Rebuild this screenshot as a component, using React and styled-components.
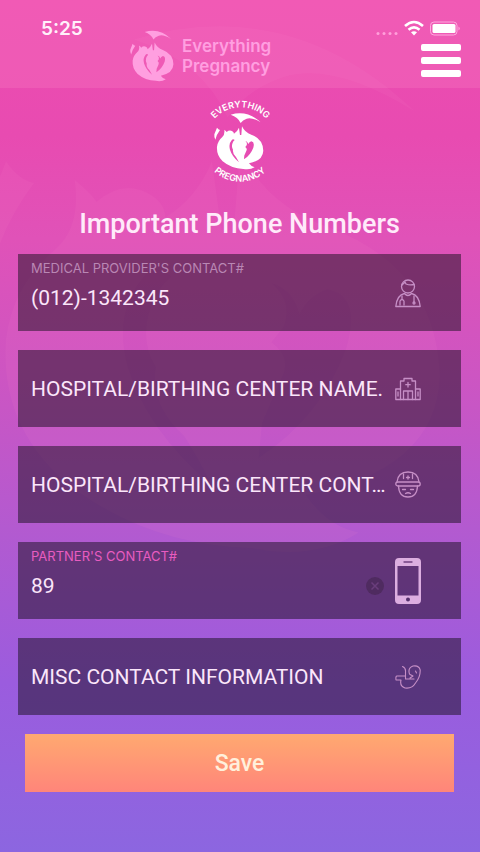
import React, { useState } from 'react';
import styled, { createGlobalStyle } from 'styled-components';

const GlobalStyle = createGlobalStyle`
  * {
    box-sizing: border-box;
  }

  body {
    margin: 0;
    font-family: Inter, sans-serif;
    color: #fdeafa;
  }
`;

const Page = styled.div`
  position: relative;
  overflow: hidden;
  min-height: 100vh;
  background: linear-gradient(
    #ee4cb0 0%,
    #e84bb1 16%,
    #e052b8 28%,
    #cd55c2 44%,
    #b35ad0 62%,
    #9b5cde 80%,
    #8c66e0 100%
  );
`;

const Watermark = styled.svg`
  position: absolute;
  top: 24px;
  left: -22px;
  width: 468px;
  color: #ff8fce;
  opacity: 0.08;
`;

const Header = styled.header`
  position: relative;
  display: grid;
  grid-template-columns: 89px 1fr auto;
  height: 88px;
  padding: 20px 19px 0 41px;
  background: rgba(255, 150, 205, 0.2);
`;

const Time = styled.time`
  font-size: 19px;
  font-weight: 600;
  line-height: 18px;
  color: #fff0fa;
`;

const Brand = styled.a`
  display: flex;
  gap: 8px;
  align-self: start;
  padding-top: 10px;
  color: #ff9fe0;
  text-decoration: none;
`;

const BrandMark = styled.svg`
  width: 44px;
  height: 52px;
`;

const BrandName = styled.span`
  padding-top: 6px;
  font-size: 17px;
  font-weight: 600;
  line-height: 20px;
`;

const HeaderRight = styled.div`
  display: flex;
  flex-direction: column;
  align-items: flex-end;
  gap: 8px;
`;

const StatusIcons = styled.svg`
  display: block;
  width: 86px;
  height: 16px;
`;

const MenuButton = styled.button`
  display: flex;
  flex-direction: column;
  gap: 6px;
  width: 40px;
  padding: 0;
  border: 0;
  background: none;
  cursor: pointer;
`;

const MenuBar = styled.span`
  height: 7px;
  border-radius: 2px;
  background: #fff;
`;

const Main = styled.main`
  position: relative;
  display: flex;
  flex-direction: column;
  align-items: center;
  padding: 10px 19px 60px 18px;
`;

const Badge = styled.svg`
  width: 64px;
  height: 86px;
  color: #fff;
`;

const Title = styled.h1`
  margin: 24px 0 14px;
  font-family: Roboto, sans-serif;
  font-size: 27px;
  font-weight: 500;
  line-height: 32px;
  color: #ffeafa;
`;

const Form = styled.form`
  display: flex;
  flex-direction: column;
  gap: 19px;
  width: 100%;
`;

const Card = styled.div`
  display: flex;
  align-items: center;
  gap: 7px;
  height: 77px;
  padding: 0 40px 0 13px;
  background: rgba(22, 14, 28, 0.5);
`;

const FieldBody = styled.div`
  display: flex;
  flex: 1;
  flex-direction: column;
  gap: 8px;
  min-width: 0;
  align-self: ${({ $labelled }) => ($labelled ? 'flex-start' : 'center')};
  padding-top: ${({ $labelled }) => ($labelled ? '7px' : '0')};
`;

const Label = styled.label`
  font-size: 13px;
  line-height: 14px;
  color: ${({ $active }) => ($active ? '#e85cc0' : '#b987b4')};
`;

const InputRow = styled.div`
  display: flex;
  align-items: center;
  padding-right: ${({ $clearable }) => ($clearable ? '4px' : '0')};
`;

const Input = styled.input`
  flex: 1;
  min-width: 0;
  height: 30px;
  padding: 0;
  border: 0;
  outline: 0;
  background: none;
  color: #fbe6fa;
  font-family: Roboto, sans-serif;
  font-size: 21px;
  text-overflow: ellipsis;

  &::placeholder {
    color: #fbe6fa;
    opacity: 1;
  }
`;

const ClearButton = styled.button`
  display: flex;
  width: 18px;
  height: 18px;
  padding: 0;
  border: 0;
  border-radius: 50%;
  background: #4f2b60;
  color: #6a3d7c;
  cursor: pointer;
`;

const FieldIcon = styled.svg`
  flex: none;
  width: 26px;
  height: ${({ $tall }) => ($tall ? '46px' : '30px')};
  fill: none;
  stroke: #c68fc6;
  stroke-width: 1.3;
  stroke-linecap: round;
  stroke-linejoin: round;
`;

const SaveButton = styled.button`
  height: 58px;
  margin: 0 7px;
  border: 0;
  background: linear-gradient(#ffa970, #ff857a);
  color: #fff0dc;
  font-family: Roboto, sans-serif;
  font-size: 23px;
  font-weight: 500;
  cursor: pointer;
`;

// mother, father and baby curled up under the swoosh
const Emblem = () => (
  <g fill="currentColor">
    <path d="M50 5 Q100 -10 140 28 Q114 12 98 17 Q86 21 80 30 Q72 12 50 5Z" />
    <path d="M9 44 L1 64 Q0 74 4 80 Q8 64 18 51 Q13 50 9 44Z" />
    <path
      fillRule="evenodd"
      d="M31 50 Q36 54 38 57 Q46 50 54 54 Q60 57 60 62 Q70 56 75 44 L78 66 L82 66 L84 40 Q92 58 112 65 Q147 78 148 113 Q147 143 105 151 Q112 161 122 163 Q108 172 88 168 Q52 167 26 145 Q7 127 9 101 Q11 84 25 72 Q33 65 31 50Z
      M54 80 Q43 92 48 110 Q54 130 75 148 Q70 138 66 132 Q55 122 57 110 Q52 102 55 92 Q57 85 62 81 Q58 77 54 80Z
      M94 83 Q101 89 98 97 L94 102 Q101 107 97 114 L91 128 L90 139 Q110 126 118 104 Q123 87 112 85 Q106 87 103 93 Q101 85 94 83Z"
    />
  </g>
);

const DoctorIcon = () => (
  <FieldIcon viewBox="0 0 26 30" aria-hidden="true">
    <circle cx="13" cy="8.5" r="6.5" />
    <path d="M7 7 L10 4 L11 6 Q15 7.500 19 6.500" />
    <path d="M9.500 15.500 Q2 17 .8 28.500 H25.200 Q24 17 16.500 15.500 Q13 19.500 9.500 15.500Z" />
    <path d="M5 27 V23 Q7 20 9 23 V27 M7 18 V21 M19 18 V24" />
    <circle cx="19" cy="25" r="1" />
  </FieldIcon>
);

const HospitalIcon = () => (
  <FieldIcon viewBox="0 0 26 30" aria-hidden="true">
    <path d="M5.500 25.500 V7 H9 V4.500 H17 V7 H20.500 V25.500" />
    <path d="M5.500 15 H.8 V25.500 H25.200 V15 H20.500" />
    <path d="M13 8.500 V13 M10.800 10.700 H15.200" />
    <path d="M8.500 25.500 V17 H17.500 V25.500 M13 17 V25.500 M3 18 V22 M23 18 V22" />
  </FieldIcon>
);

const HelmetIcon = () => (
  <FieldIcon viewBox="0 0 26 30" aria-hidden="true">
    <path d="M2 12 Q3 2 13 2 T24 12" />
    <rect x=".8" y="12" width="24.400" height="4" rx="2" />
    <path d="M3.500 16 Q4 27 13 27 Q22 27 22.500 16" />
    <path d="M8.500 4 V8.500 M17.500 4 V8.500 M13 6 V9 M11.500 7.500 H14.500" />
    <path d="M7.500 19.500 H10.500 M15.500 19.500 H18.500 M10.500 23.500 Q13 22 15.500 23.500" />
  </FieldIcon>
);

const PhoneIcon = () => (
  <FieldIcon $tall viewBox="0 0 26 46" aria-hidden="true">
    <path
      fill="#dcaee0"
      stroke="none"
      fillRule="evenodd"
      d="M4 0 H22 Q26 0 26 4 V42 Q26 46 22 46 H4 Q0 46 0 42 V4 Q0 0 4 0Z M2.500 8 V37.500 H23.500 V8Z"
    />
    <path stroke="#704080" d="M9 4 H17" />
    <circle cx="13" cy="41.500" r="2" fill="#55306d" stroke="none" />
  </FieldIcon>
);

const BabyIcon = () => (
  <FieldIcon viewBox="0 0 26 30" aria-hidden="true">
    <path
      strokeWidth="1.1"
      d="M7.500 4.500 Q11 6 10.500 10 V17 H19 M15 16 L18 14 L15 12.500 M10 14 H2 Q.5 14 1 18 H6 Q4.500 24 10 26 Q17 27 20.500 21 Q25.500 15 25.200 8 Q24 3 18 4 Q12.500 6 14.500 12 M20.500 9 L21.500 11"
    />
  </FieldIcon>
);

const fields = [
  { id: 'provider', name: "MEDICAL PROVIDER'S CONTACT#", value: '(012)-1342345', Icon: DoctorIcon },
  { id: 'hospital', name: 'HOSPITAL/BIRTHING CENTER NAME.', value: '', Icon: HospitalIcon },
  { id: 'hospitalContact', name: 'HOSPITAL/BIRTHING CENTER CONT...', value: '', Icon: HelmetIcon },
  { id: 'partner', name: "PARTNER'S CONTACT#", value: '89', Icon: PhoneIcon, active: true },
  { id: 'misc', name: 'MISC CONTACT INFORMATION', value: '', Icon: BabyIcon },
];

const Field = ({ id, name, value: initial, Icon, active }) => {
  const [value, setValue] = useState(initial);
  const labelled = value !== '';

  return (
    <Card>
      <FieldBody $labelled={labelled}>
        {labelled && <Label htmlFor={id} $active={active}>{name}</Label>}
        <InputRow $clearable={active}>
          <Input
            id={id}
            type="text"
            aria-label={name}
            placeholder={name}
            value={value}
            onChange={(e) => setValue(e.target.value)}
          />
          {active && labelled && (
            <ClearButton type="button" aria-label="Clear" onClick={() => setValue('')}>
              <svg viewBox="0 0 18 18" width="18" height="18" stroke="currentColor" strokeWidth="1.5">
                <path d="M5.500 5.500 L12.500 12.500 M12.500 5.500 L5.500 12.500" />
              </svg>
            </ClearButton>
          )}
        </InputRow>
      </FieldBody>
      <Icon />
    </Card>
  );
};

const App = () => {
  return (
    <>
      <GlobalStyle />
      <Page>
        <Watermark viewBox="0 0 150 174" aria-hidden="true">
          <Emblem />
        </Watermark>

        <Header>
          <Time>5:25</Time>
          <Brand href="#">
            <BrandMark viewBox="0 -2 150 174" preserveAspectRatio="none" aria-hidden="true">
              <Emblem />
            </BrandMark>
            <BrandName>
              Everything
              <br />
              Pregnancy
            </BrandName>
          </Brand>
          <HeaderRight>
            <StatusIcons viewBox="0 0 86 16" aria-hidden="true">
              <g fill="#ff9fda">
                <circle cx="3" cy="13.500" r="1.500" />
                <circle cx="9" cy="13.500" r="1.500" />
                <circle cx="15" cy="13.500" r="1.500" />
                <circle cx="21" cy="13.500" r="1.500" />
              </g>
              <g fill="none" stroke="#fff" strokeWidth="2.600">
                <path d="M30 6 Q39 -2 48 6" />
                <path d="M33.500 9.800 Q39 5 44.500 9.800" />
              </g>
              <path d="M36 12.300 Q39 10 42 12.300 L39 15.500Z" fill="#fff" />
              <rect x="55.500" y="2" width="26.500" height="13" rx="3.500" fill="none" stroke="#ffa9df" />
              <rect x="57.500" y="4" width="23" height="9" rx="1.500" fill="#fff" />
              <path d="M83.500 6.500 Q86 8.500 83.500 10.500Z" fill="#ffa9df" />
            </StatusIcons>
            <MenuButton type="button" aria-label="Menu">
              <MenuBar />
              <MenuBar />
              <MenuBar />
            </MenuButton>
          </HeaderRight>
        </Header>

        <Main>
          <Badge viewBox="0 0 64 86" role="img" aria-label="Everything Pregnancy">
            <defs>
              <path id="arcTop" d="M4 24 A35 35 0 0 1 61 24" />
              <path id="arcBottom" d="M2 69 A38 38 0 0 0 62 69" />
            </defs>
            <g fill="currentColor" fontFamily="Inter, sans-serif" fontWeight="600" fontSize="9" textAnchor="middle">
              <text>
                <textPath href="#arcTop" startOffset="50%">EVERYTHING</textPath>
              </text>
              <text>
                <textPath href="#arcBottom" startOffset="50%">PREGNANCY</textPath>
              </text>
            </g>
            <g transform="translate(6 15) scale(0.333)">
              <Emblem />
            </g>
          </Badge>
          <Title>Important Phone Numbers</Title>
          <Form onSubmit={(e) => e.preventDefault()}>
            {fields.map((field) => (
              <Field key={field.id} {...field} />
            ))}
            <SaveButton type="submit">Save</SaveButton>
          </Form>
        </Main>
      </Page>
    </>
  );
};

export default App;
